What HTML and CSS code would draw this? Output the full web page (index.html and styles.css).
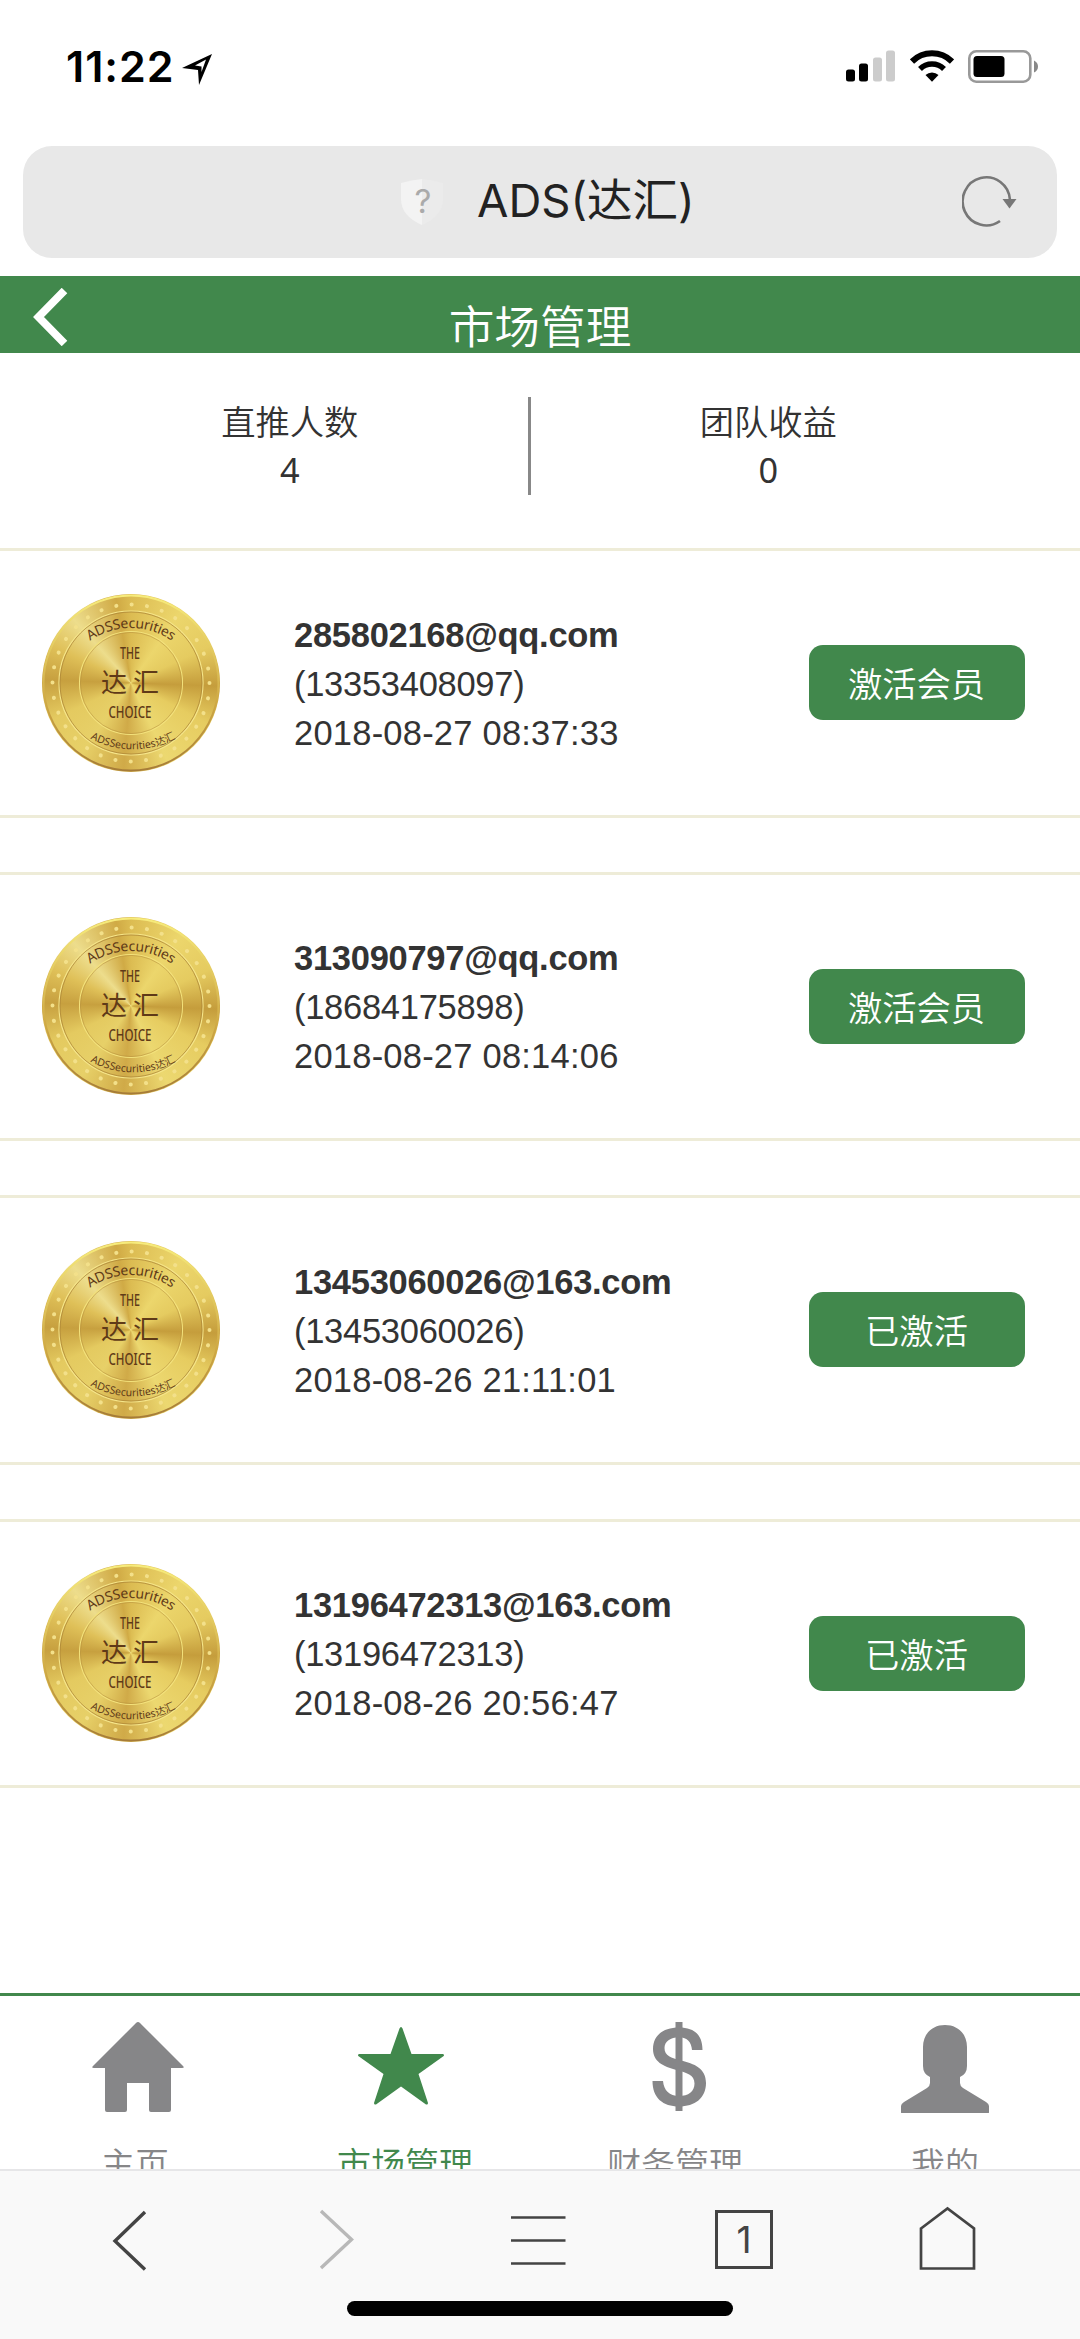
FILE: index.html
```html
<!DOCTYPE html>
<html lang="zh-CN">
<head>
<meta charset="utf-8">
<title>ADS(达汇)</title>
<link rel="stylesheet" href="styles.css">
</head>
<body>
<svg class="defs" width="0" height="0" aria-hidden="true">
  <defs>
    <linearGradient id="edge" x1="0" y1="0" x2="0" y2="1">
      <stop offset="0" stop-color="#f7ec7c"/><stop offset=".6" stop-color="#d0aa45"/><stop offset="1" stop-color="#a67c38"/>
    </linearGradient>
    <path id="arcTop" d="M30 65.500A71 71 0 0 1 148 65.500" fill="none"/>
    <path id="arcLow" d="M25 126.500A90 90 0 0 0 157 126.500" fill="none"/>
    <symbol id="coin" viewBox="0 0 178 178">
      <g fill="none">
        <circle cx="89" cy="89" r="87.500" stroke="url(#edge)" stroke-width="2"/>
        <circle cx="89" cy="89" r="72" stroke="#f5e58a" stroke-width="1.2"/>
        <circle cx="89" cy="89" r="71" stroke="#a98335" stroke-width=".7"/>
        <circle cx="89" cy="89" r="51.5" stroke="#f3e27c" stroke-width="1.1"/>
        <circle cx="89" cy="89" r="50.6" stroke="#b28c3a" stroke-width=".5"/>
        <circle cx="89" cy="89" r="78.5" stroke="#f3e08a" stroke-width="4" stroke-linecap="round" stroke-dasharray=".1 15.314"/>
      </g>
      <g fill="#5f3a18" text-anchor="middle">
        <text font-family="Noto Sans, sans-serif" font-size="14"><textPath href="#arcTop" startOffset="50%" textLength="87">ADSSecurities</textPath></text>
        <text font-family="Noto Sans, Noto Sans CJK SC, sans-serif" font-size="10.500"><textPath href="#arcLow" startOffset="50%" textLength="89">ADSSecurities达汇</textPath></text>
        <text x="88" y="65.300" font-family="Noto Sans, sans-serif" font-size="15.500" font-weight="500" textLength="20" lengthAdjust="spacingAndGlyphs">THE</text>
        <text x="88" y="98" font-family="Noto Sans CJK SC, sans-serif" font-size="26" font-weight="400" textLength="58">达汇</text>
        <text x="88" y="123.500" font-family="Noto Sans, sans-serif" font-size="15.500" font-weight="500" textLength="43" lengthAdjust="spacingAndGlyphs">CHOICE</text>
      </g>
    </symbol>
  </defs>
</svg>

<div class="screen">
  <header class="status">
    <div class="status-left">
      <span class="time">11:22</span>
      <svg width="30" height="31" viewBox="0 0 30 31"><path fill-rule="evenodd" d="M30 0 17 31 16 16 0 14ZM24 5.500 13 11.500 19.500 12.500 19.500 18Z"/></svg>
    </div>
    <div class="status-right">
      <svg width="50" height="32" viewBox="0 0 50 32"><rect y="19.500" width="9" height="12" rx="2.500"/><rect x="13" y="13.500" width="9" height="18" rx="2.500"/><g fill="#ccc"><rect x="27" y="7.500" width="9" height="24" rx="2.500"/><rect x="40" y=".5" width="9" height="31" rx="2.500"/></g></svg>
      <svg width="44" height="32" viewBox="0 0 44 32"><g fill="none" stroke="#000"><path d="M2 11.500a28.500 28.500 0 0 1 40 0" stroke-width="6"/><path d="M10 19a17 17 0 0 1 24 0" stroke-width="5.500"/></g><path d="M15.500 25a9.500 9.500 0 0 1 13 0L22 31.700Z"/></svg>
      <svg width="70" height="33" viewBox="0 0 70 33"><rect x="1.300" y="1.300" width="61" height="30.400" rx="7" fill="none" stroke="#999" stroke-width="2.600"/><rect x="5.500" y="6" width="31" height="21" rx="3.500"/><path d="M66 10.500q4 2 4 6t-4 6Z" fill="#888"/></svg>
    </div>
  </header>

  <div class="address">
    <svg class="shield" width="42" height="46" viewBox="0 0 42 46"><path d="M21 0Q11 1 0 4v16q0 17 21 26Z" fill="#f3f3f3"/><path d="M21 0q10 1 21 4v16q0 17-21 26Z" fill="#ebebeb"/><text x="22" y="34" text-anchor="middle" class="shield-mark">?</text></svg>
    <span class="address-text">ADS(达汇)</span>
    <svg class="reload" width="56" height="52" viewBox="0 0 56 52"><path d="M48 24A23.700 24 0 1 0 38 45" fill="none" stroke="#777" stroke-width="2.600"/><path d="M40.500 23H54.500L47.500 32.500Z" fill="#777"/></svg>
  </div>

  <div class="titlebar">
    <svg class="title-back" width="36" height="58" viewBox="0 0 36 58"><path d="M31.500 2.500 5.500 29 31.500 55.500" fill="none" stroke="#fff" stroke-width="7.800"/></svg>
    <h1>市场管理</h1>
  </div>

  <main>
    <section class="stats">
      <div class="stat"><span>直推人数</span><span>4</span></div>
      <div class="divider"></div>
      <div class="stat"><span>团队收益</span><span>0</span></div>
    </section>
    <ul class="members">
      <li class="member"><div class="coin"><svg><use href="#coin"/></svg></div><div class="info"><b>285802168@qq.com</b><span>(13353408097)</span><span class="date">2018-08-27 08:37:33</span></div><button class="action">激活会员</button></li>
      <li class="member"><div class="coin"><svg><use href="#coin"/></svg></div><div class="info"><b>313090797@qq.com</b><span>(18684175898)</span><span class="date">2018-08-27 08:14:06</span></div><button class="action">激活会员</button></li>
      <li class="member"><div class="coin"><svg><use href="#coin"/></svg></div><div class="info"><b>13453060026@163.com</b><span>(13453060026)</span><span class="date">2018-08-26 21:11:01</span></div><button class="action">已激活</button></li>
      <li class="member"><div class="coin"><svg><use href="#coin"/></svg></div><div class="info"><b>13196472313@163.com</b><span>(13196472313)</span><span class="date">2018-08-26 20:56:47</span></div><button class="action">已激活</button></li>
    </ul>
  </main>

  <nav class="tabs">
    <a class="tab tab-home"><svg width="92" height="92" viewBox="0 0 92 92"><path d="M44 2q2-2 4 0L91 45q2 2-1 2H79v42q0 2-2 2H59q-2 0-2-2V62H35v27q0 2-2 2H15q-2 0-2-2V47H2q-3 0-1-2Z"/></svg><span>主页</span></a>
    <a class="tab tab-market"><svg width="92" height="92" viewBox="0 0 92 92"><path d="M46 6q1 0 1.500 1.500L56.500 33H88q2 1 0 2.500L63.500 53 73 82q0 2-2 1.500L46 65.500 21 83.500q-2 .5-2-1.500L28.500 53 4 35.500Q2 34 4 33H35.500L44.500 7.500Q45 6 46 6Z"/></svg><span>市场管理</span></a>
    <a class="tab tab-money"><svg width="92" height="92" viewBox="0 0 92 92"><path d="M42.500 1h7v89h-7Z"/><path d="M19.500 60h10.500c.8 9.500 6.500 15 16 15s15.500-4.500 15.500-12.500c0-9-8-10.500-18-13.500C30 45.500 20 40.500 20 28 20 14.500 30 6.500 46 6.500S69.500 14.500 69.500 29H59c-.7-8-4.500-12.800-13-12.800S31.500 20.500 31.500 27c0 8 7 10 16 12.500C61.500 42.500 73 47.500 73 62 73 77 62 85.500 46 85.500S19.500 77 19.500 60Z"/></svg><span>财务管理</span></a>
    <a class="tab tab-user"><svg width="92" height="92" viewBox="0 0 92 92"><path d="M46 4C59 4 68 13 68 26v19q0 8-7 11v6q0 3 3 5l23 14q3 2 3 4v6q0 2-2 2H4q-2 0-2-2v-6q0-2 3-4l23-14q3-2 3-5v-6q-7-3-7-11V26C24 13 33 4 46 4Z"/></svg><span>我的</span></a>
  </nav>

  <footer class="toolbar">
    <div class="tools">
      <svg viewBox="0 0 72 72"><path d="M49 8 19 37l30 28.500" stroke-width="3.400"/></svg>
      <svg viewBox="0 0 72 72" class="off"><path d="M21 7 51.500 35.500 21 64" stroke-width="3.400"/></svg>
      <svg viewBox="0 0 72 72"><path d="M7 13.500H61.500M7 36.500H61.500M7 59.500H61.500"/></svg>
      <div class="count">1</div>
      <svg viewBox="0 0 72 72"><path d="M9 24.500 35.500 4.500 62 24.500V64.500H9Z"/></svg>
    </div>
    <div class="indicator"></div>
  </footer>
</div>
</body>
</html>
```

FILE: styles.css
```css
* { box-sizing: border-box; }
body { margin: 0; background: #fff; }
svg { display: block; flex: none; }
.defs { position: absolute; }

.screen {
  width: 1080px;
  height: 2339px;
  overflow: hidden;
  display: flex;
  flex-direction: column;
  font-family: "Liberation Sans", "Noto Sans CJK SC", sans-serif;
  color: #333;
}

/* status bar */
.status {
  flex: none;
  height: 146px;
  padding: 50px 42px 0 66px;
  display: flex;
  justify-content: space-between;
}
.status-left { display: flex; gap: 11px; }
.status-left svg { margin-top: 4px; }
.time {
  width: 105px;
  font: 600 43px/33px Inter, sans-serif;
  letter-spacing: 1px;
  color: #000;
  white-space: nowrap;
}
.status-right { display: flex; gap: 14px; }

/* address bar */
.address {
  flex: none;
  height: 112px;
  margin: 0 23px;
  padding: 0 39px 0 378px;
  border-radius: 29px;
  background: #e8e8e8;
  display: flex;
  align-items: center;
}
.address-text {
  margin: -2px 0 0 34px;
  font: 400 45.500px/60px Inter, "Noto Sans CJK SC", sans-serif;
  color: #222;
  white-space: nowrap;
}
.shield-mark { font: 400 33px Inter, sans-serif; fill: #aaa; }
.reload { margin-left: auto; }

/* page title */
.titlebar {
  flex: none;
  height: 77px;
  margin-top: 18px;
  padding-left: 33px;
  background: #41884c;
  display: flex;
  align-items: center;
}
.title-back { margin-top: 5px; }
h1 {
  flex: 1;
  margin: 18px 69px 0 0;
  text-align: center;
  font: 350 45.700px/56px "Noto Sans CJK SC", sans-serif;
  color: #fff;
}

/* stats */
main { flex: 1; }
.stats {
  height: 195px;
  padding: 44px 74px 0 52px;
  display: flex;
}
.stat {
  flex: 1;
  margin-top: -1px;
  display: flex;
  flex-direction: column;
  align-items: center;
  font: 350 34.300px/49px "Noto Sans CJK SC", sans-serif;
}
.stat span + span { font-family: "Noto Sans", sans-serif; font-weight: 400; }
.divider { width: 3px; height: 98px; background: #888; }

/* members */
.members {
  margin: 0;
  padding: 0;
  list-style: none;
  display: grid;
  row-gap: 54px;
}
.member {
  height: 269.500px;
  border-top: 3px solid #eeecd8;
  border-bottom: 3px solid #eeecd8;
  padding: 0 55px 0 42px;
  display: flex;
  align-items: center;
}
.coin {
  width: 178px;
  height: 178px;
  border-radius: 50%;
  background: conic-gradient(#dcbc52, #ecd66c 35deg, #e5cb60 65deg, #c59d3c 92deg, #e6cc60 118deg, #ecd870 155deg, #d0aa48 185deg, #e7d068 215deg, #e4ca60 245deg, #c7a03f 272deg, #dfc058 295deg, #eddd8c 318deg, #d0aa45 350deg, #dcbc52);
}
.coin svg { width: 178px; height: 178px; }
.info {
  margin: 3px 0 0 74px;
  display: flex;
  flex-direction: column;
  font-size: 34.500px;
  line-height: 49px;
  white-space: nowrap;
  letter-spacing: -.28px;
}
.info .date { letter-spacing: .22px; }
.action {
  width: 216px;
  height: 75px;
  margin-left: auto;
  padding: 0 1px 1px 0;
  border: 0;
  border-radius: 14px;
  background: #41884c;
  color: #fff;
  font: 350 34.300px/1 "Noto Sans CJK SC", sans-serif;
}

/* tab bar */
.tabs {
  flex: none;
  height: 176px;
  border-top: 3px solid #41884c;
  overflow: hidden;
  display: grid;
  grid-template-columns: repeat(4, 1fr);
}
.tab {
  padding-top: 25px;
  display: flex;
  flex-direction: column;
  align-items: center;
  gap: 25px;
  color: #868688;
  font: 350 34px/49px "Noto Sans CJK SC", sans-serif;
}
.tab svg { fill: currentColor; }
.tab-home svg { margin-left: 6px; }
.tab-market { color: #41884c; }
.tab-market svg { margin-right: 8px; }
.tab-money svg { margin-left: 8px; }

/* browser toolbar */
.toolbar {
  flex: none;
  height: 170px;
  border-top: 2px solid #e6e6e8;
  background: #f9f9f9;
  display: flex;
  flex-direction: column;
  align-items: center;
}
.tools {
  width: 100%;
  padding: 33px 96px 0;
  display: flex;
  justify-content: space-between;
}
.tools svg { width: 72px; height: 72px; fill: none; stroke: #444; stroke-width: 2.700; }
.tools .off { stroke: #b8b8b8; }
.count {
  width: 58px;
  height: 59px;
  margin: 6px 7px;
  border: 3px solid #444;
  text-align: center;
  font: 400 37px/53px Inter, sans-serif;
  color: #444;
}
.indicator {
  width: 386px;
  height: 15px;
  margin-top: 25px;
  border-radius: 8px;
  background: #000;
}
```
